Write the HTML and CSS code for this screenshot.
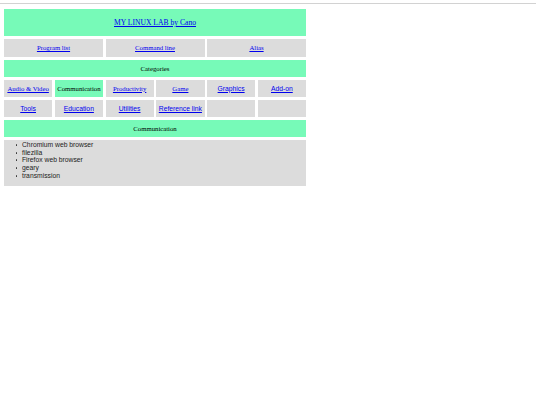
FILE: index.html
```html
<!DOCTYPE html>
<html>
<head>
<meta charset="utf-8">
<link rel="stylesheet" href="styles.css">
</head>
<body>
<div class="rule"></div>
<div class="board">
  <div class="cell green title span6"><a href="#">MY LINUX LAB by Cano</a></div>
  <div class="cell gray span2"><a href="#">Program list</a></div>
  <div class="cell gray span2"><a href="#">Command line</a></div>
  <div class="cell gray span2"><a href="#">Alias</a></div>
  <div class="cell green span6">Categories</div>
  <div class="cell gray"><a href="#">Audio &amp; Video</a></div>
  <div class="cell green">Communication</div>
  <div class="cell gray"><a href="#">Productivity</a></div>
  <div class="cell gray"><a href="#">Game</a></div>
  <div class="cell gray sans"><a href="#">Graphics</a></div>
  <div class="cell gray sans"><a href="#">Add-on</a></div>
  <div class="cell gray sans"><a href="#">Tools</a></div>
  <div class="cell gray sans"><a href="#">Education</a></div>
  <div class="cell gray sans"><a href="#">Utilities</a></div>
  <div class="cell gray sans"><a href="#">Reference link</a></div>
  <div class="cell gray"></div>
  <div class="cell gray"></div>
  <div class="cell green span6">Communication</div>
  <div class="cell gray span6 listcell">
    <ul class="apps">
      <li>Chromium web browser</li>
      <li>filezilla</li>
      <li>Firefox web browser</li>
      <li>geary</li>
      <li>transmission</li>
    </ul>
  </div>
</div>
</body>
</html>
```
FILE: styles.css
```css
html, body {
  margin: 0;
  padding: 0;
  background: #ffffff;
}
body {
  font-family: "Liberation Serif", "Times New Roman", serif;
  font-size: 6.75px;
  color: #000;
}
.rule {
  margin-top: 3px;
  width: 536px;
  height: 0;
  border-top: 1px solid #d2d2d2;
}
.board {
  margin: 5px 0 0 4px;
  width: 302px;
  display: grid;
  grid-template-columns: repeat(6, 1fr);
  grid-template-rows: 27px 18.5px 17.5px 17.5px 17.5px 17.5px 46.5px;
  gap: 2.5px;
}
.cell {
  display: flex;
  align-items: center;
  justify-content: center;
  text-align: center;
  white-space: nowrap;
}
.green { background: #77fab8; }
.gray { background: #dcdcdc; }
.span6 { grid-column: span 6; }
.span2 { grid-column: span 2; }
.title { font-size: 7.6px; }
.sans { font-family: "Liberation Sans", Arial, sans-serif; }
a { color: #0000ee; text-decoration: underline; }
.listcell {
  display: block;
  text-align: left;
  font-family: "Liberation Sans", Arial, sans-serif;
}
.apps {
  margin: 0;
  padding: 1.5px 0 0 18px;
  line-height: 7.7px;
  color: #222;
  list-style: none;
}
.apps li {
  position: relative;
}
.apps li::before {
  content: "";
  position: absolute;
  left: -6.5px;
  top: 3px;
  width: 1.8px;
  height: 1.8px;
  border-radius: 50%;
  background: #333;
}
```
